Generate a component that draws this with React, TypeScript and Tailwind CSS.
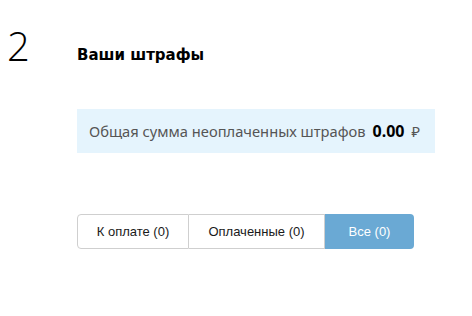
export default function App() {
  return (
    <div className="min-h-screen bg-white" style={{ fontFamily: '"DejaVu Sans", sans-serif' }}>
      <div className="flex pt-[26px]">
        <div
          className="w-[77px] pl-[7px] text-[40px] font-extralight leading-[40px] text-black"
          style={{ fontFamily: '"Open Sans", sans-serif' }}
        >
          2
        </div>
        <div className="w-[358px]">
          <h2 className="mt-[19px] text-[15px] font-bold leading-5 text-black">Ваши штрафы</h2>
          <div
            className="mt-[44px] flex h-[44px] items-center whitespace-nowrap bg-[#e5f4fd] px-3 text-[14.7px] text-[#555]"
            style={{ fontFamily: '"Noto Sans", sans-serif' }}
          >
            <span>Общая сумма неоплаченных штрафов</span>
            <span className="ml-[7px] text-[16px] font-bold text-black">0.00</span>
            <span className="ml-[7px] text-[#555]">₽</span>
          </div>
          <div
            className="mt-[61px] flex h-[35px] w-[337px] text-[13px]"
            style={{ fontFamily: '"Liberation Sans", Arial, sans-serif' }}
          >
            <button className="w-[112px] rounded-l-[4px] border border-[#cfcfcf] bg-white text-[#1a1a1a]">
              К оплате (0)
            </button>
            <button className="w-[136px] border-y border-r border-[#cfcfcf] bg-white text-[#1a1a1a]">
              Оплаченные (0)
            </button>
            <button className="flex-1 rounded-r-[4px] bg-[#6aa9d4] text-white">Все (0)</button>
          </div>
        </div>
      </div>
    </div>
  );
}
